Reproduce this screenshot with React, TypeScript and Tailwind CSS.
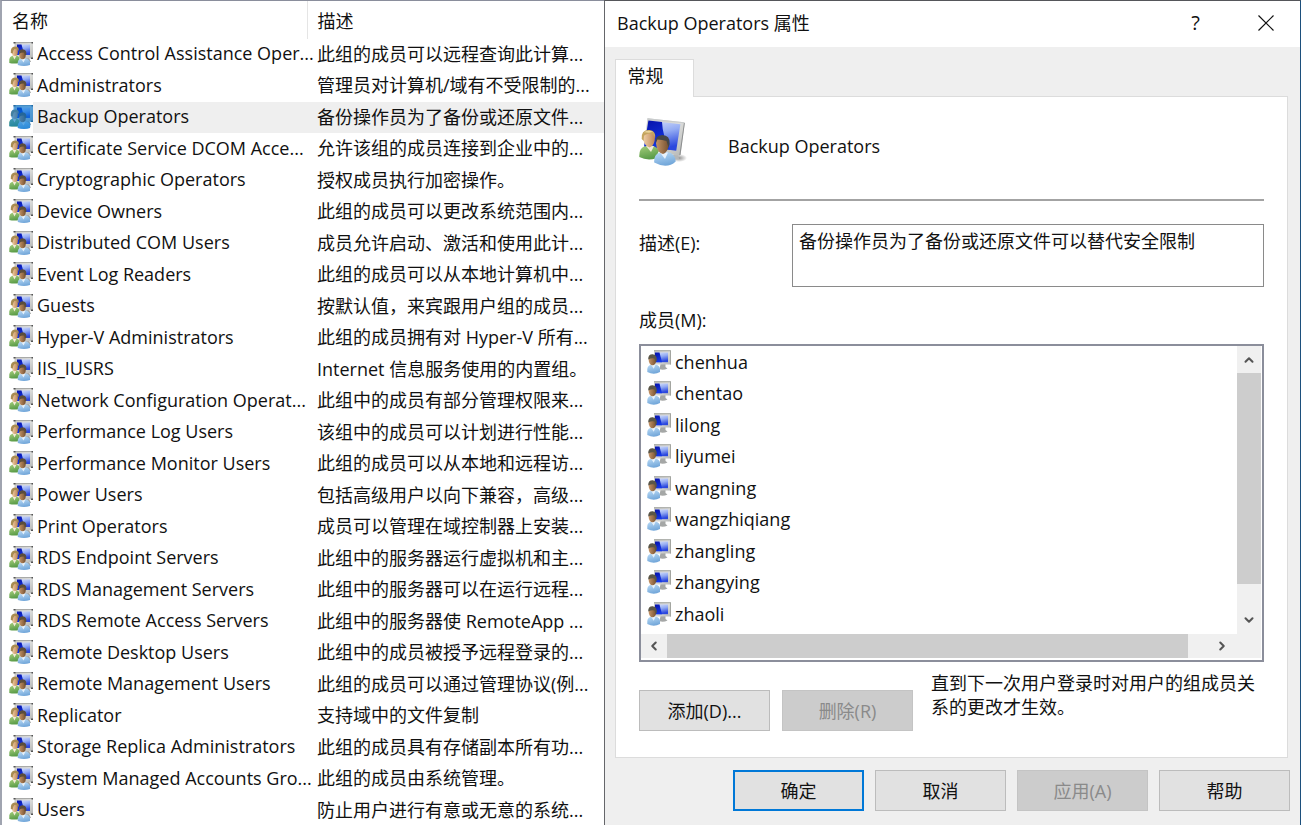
import { ChevronDown, ChevronLeft, ChevronRight, ChevronUp } from "lucide-react";

const groups: [string, string][] = [
  ["Access Control Assistance Oper...", "此组的成员可以远程查询此计算..."],
  ["Administrators", "管理员对计算机/域有不受限制的..."],
  ["Backup Operators", "备份操作员为了备份或还原文件..."],
  ["Certificate Service DCOM Acce...", "允许该组的成员连接到企业中的..."],
  ["Cryptographic Operators", "授权成员执行加密操作。"],
  ["Device Owners", "此组的成员可以更改系统范围内..."],
  ["Distributed COM Users", "成员允许启动、激活和使用此计..."],
  ["Event Log Readers", "此组的成员可以从本地计算机中..."],
  ["Guests", "按默认值，来宾跟用户组的成员..."],
  ["Hyper-V Administrators", "此组的成员拥有对 Hyper-V 所有..."],
  ["IIS_IUSRS", "Internet 信息服务使用的内置组。"],
  ["Network Configuration Operat...", "此组中的成员有部分管理权限来..."],
  ["Performance Log Users", "该组中的成员可以计划进行性能..."],
  ["Performance Monitor Users", "此组的成员可以从本地和远程访..."],
  ["Power Users", "包括高级用户以向下兼容，高级..."],
  ["Print Operators", "成员可以管理在域控制器上安装..."],
  ["RDS Endpoint Servers", "此组中的服务器运行虚拟机和主..."],
  ["RDS Management Servers", "此组中的服务器可以在运行远程..."],
  ["RDS Remote Access Servers", "此组中的服务器使 RemoteApp ..."],
  ["Remote Desktop Users", "此组中的成员被授予远程登录的..."],
  ["Remote Management Users", "此组的成员可以通过管理协议(例..."],
  ["Replicator", "支持域中的文件复制"],
  ["Storage Replica Administrators", "此组的成员具有存储副本所有功..."],
  ["System Managed Accounts Gro...", "此组的成员由系统管理。"],
  ["Users", "防止用户进行有意或无意的系统..."],
];

const members = ["chenhua", "chentao", "lilong", "liyumei", "wangning", "wangzhiqiang", "zhangling", "zhangying", "zhaoli"];

const selectedGroup = "Backup Operators";

function Gradients() {
  return (
    <svg className="absolute size-0" aria-hidden="true">
      <defs>
        <linearGradient id="screenLight" x1="0" y1="0" x2="0.3" y2="1">
          <stop offset="0" stopColor="#dbe4fd" />
          <stop offset="0.5" stopColor="#93abf3" />
          <stop offset="1" stopColor="#2c48de" />
        </linearGradient>
        <linearGradient id="screenDark" x1="0" y1="0" x2="0.4" y2="1">
          <stop offset="0" stopColor="#0712a8" />
          <stop offset="1" stopColor="#1438e6" />
        </linearGradient>
        <linearGradient id="frame" x1="0" y1="0" x2="1" y2="1">
          <stop offset="0" stopColor="#c4c5c4" />
          <stop offset="0.5" stopColor="#dcdddb" />
          <stop offset="1" stopColor="#b4b6b5" />
        </linearGradient>
        <linearGradient id="green" x1="0" y1="0" x2="0.3" y2="1">
          <stop offset="0" stopColor="#a6cf7c" />
          <stop offset="1" stopColor="#5b9c48" />
        </linearGradient>
        <linearGradient id="blue" x1="0" y1="0" x2="0.3" y2="1">
          <stop offset="0" stopColor="#bcdcf7" />
          <stop offset="1" stopColor="#74a8da" />
        </linearGradient>
        <linearGradient id="skin" x1="0" y1="0" x2="1" y2="0">
          <stop offset="0" stopColor="#f1cfa8" />
          <stop offset="1" stopColor="#bd8755" />
        </linearGradient>
        <linearGradient id="tan" x1="0" y1="0" x2="1" y2="0">
          <stop offset="0" stopColor="#c49468" />
          <stop offset="1" stopColor="#75502f" />
        </linearGradient>
        <radialGradient id="shadow">
          <stop offset="0" stopColor="#666" stopOpacity="0.7" />
          <stop offset="1" stopColor="#666" stopOpacity="0" />
        </radialGradient>
      </defs>
    </svg>
  );
}

function GroupIconLarge() {
  return (
    <svg viewBox="0 0 48 50" className="mt-px h-[50px] w-12 shrink-0 self-start" aria-hidden="true">
      <ellipse cx="40" cy="41" rx="8" ry="4" fill="url(#shadow)" />
      <path d="M34 38l5-1 1 5-6 1z" fill="#b5b7b8" />
      <path d="M8.5 1.3L45 5.2q1 .2.8 1.2L41.5 37q-.3 2-1.8 1.7L4.5 32.5z" fill="url(#frame)" />
      <path d="M8.5 1.3L45 5.2l-.2 1L8.3 2.4z" fill="#c9cccd" />
      <path d="M45 5.6l.8.6-4.2 31-1.3 1.4z" fill="#8d8f90" />
      <path d="M9.4 3.4l32 3.800-4.200 26.600-32-4.200z" fill="url(#screenLight)" />
      <path d="M9.4 3.4l13.6 1.6q.6 14 8 27.700l-25.800-3.100z" fill="url(#screenDark)" />
      <path d="M0.3 40q-.5-8.500 5-10.500l7.500-1q6 1.500 7 5.500l-3 7.500q-9 2.500-16.500-1.500z" fill="url(#green)" />
      <path d="M7 29l5 6 3-6z" fill="#f2ead9" />
      <path d="M4 20q0-6.500 6-6.500t6 6.500q-.2 9-5.500 10.500Q4.500 29 4 20z" fill="url(#skin)" />
      <path d="M2.700 22q-.8-9.500 8-9 6 .6 5.500 8-1.500-4-5-4.500Q6 17 5 19q-.4 2-.2 5z" fill="#c5a55e" />
      <path d="M5 15.200q4-2.500 9-.5l-4 1z" fill="#ead49a" />
      <path d="M15.200 45.500q-.5-8 5-9.800l8-.8q8 1 8.500 9.500-8.500 8-21.500 1.100z" fill="url(#blue)" />
      <path d="M21 35.500l5 6.500 3-6.500z" fill="#e8f2fb" />
      <path d="M17 26.500q0-7.500 6.500-7.500t6.500 7.500Q29.500 35 24 37q-6-1.500-7-10.500z" fill="url(#tan)" />
      <path d="M16.700 26q-1-7.500 6.500-8 8 .2 7.500 9l-1.200 3.500-2-6.500q-4-1.500-9-1.500z" fill="#454647" />
    </svg>
  );
}

function GroupIcon({ selected }: { selected: boolean }) {
  return (
    <svg viewBox="0 0 24 24" className="mb-0.5 size-6 shrink-0" aria-hidden="true">
      <path d="M16 16h4l2 4h-8z" fill="#9c9e9c" />
      <path d="M5.500 0h18.500v16.500H5.500z" fill="url(#frame)" />
      <path d="M5.500 0h18.500v1H5.500z" fill="#a9aaa8" />
      <path d="M4.500 0h2v1.500h-2zM22.500 0H24v1.500h-1.500zM22 15.500h2V17h-2z" fill="#555" />
      <path d="M8 2.500h13V13H8z" fill="url(#screenLight)" />
      <path d="M8 2.500h4.500l3 10.500H8z" fill="url(#screenDark)" />
      <path d="M.3 21v-3.500Q.5 14.500 4 13.500h4l2.500 2V21Q5 22 .3 21z" fill="url(#green)" />
      <path d="M3.500 13.500l2 4 2-4z" fill="#f4ead8" />
      <ellipse cx="5.800" cy="9.500" rx="3" ry="4.500" fill="url(#skin)" />
      <path d="M1.800 11Q1.300 4.500 6 4.500T9.500 9Q8 6.500 5.500 7 4 8 3.700 11.500z" fill="#a98c52" />
      <path d="M8.800 23v-3q.4-3 3.700-3.500h4.500q3.500.7 4 3.500v3q-6 2-12.200 0z" fill="url(#blue)" />
      <path d="M12 16.500l2.500 4 2-4z" fill="#e8f2fb" />
      <ellipse cx="13.500" cy="12.500" rx="3.300" ry="4.700" fill="url(#tan)" />
      <path d="M10 12q-.3-4.500 3.500-4.800 4.500.3 3.800 5.500l-1.500.5-.5-2.500q-2-.7-5.300 1.300z" fill="#5a4d3c" />
      {selected && (
        <path
          d="M4.500 0H24v17h-3q1 3 0 6-6 2-12.200 0v-1.500H.3v-4Q.5 14.500 3 13.700 1 10 2.300 6.500q1-2 2.200-2z"
          fill="#0078d7"
          fillOpacity="0.6"
        />
      )}
    </svg>
  );
}

function UserIcon() {
  return (
    <svg viewBox="0 0 24 24" className="size-6 shrink-0" aria-hidden="true">
      <path d="M13.500 14h5v3l2 1.500q-4 2-8 .8z" fill="#a5a7a6" />
      <path d="M7 .3h16.500q.5 0 .5.700v13q0 .6-.6.600H7z" fill="url(#frame)" />
      <path d="M7 .3h17v1H7zM23 1h1v13.500h-1z" fill="#a3a5a0" />
      <path d="M8 2.500h13v9.700H8z" fill="url(#screenLight)" />
      <path d="M8 2.500h4.500l2.500 9.700H8z" fill="url(#screenDark)" />
      <path d="M.3 22v-3q.2-3.500 4-4.500h4.500q4 1 4.200 4.500v3q-6 3.500-12.700 0z" fill="url(#blue)" />
      <path d="M4 14.500l2.700 4.300 2-4.300z" fill="#e8f2fb" />
      <ellipse cx="5.500" cy="10" rx="3.800" ry="5.300" fill="url(#tan)" />
      <path d="M1.200 9.500Q1 4.300 5.500 4.200q4.800.3 4.200 6.300l-1.200 1.500-.9-3.500Q5 7.500 1.200 9.500z" fill="#5a5648" />
    </svg>
  );
}

const pushButton = "h-[41px] w-[131px] shrink-0 text-center";
const enabledButton = "border border-[#bcbcbc] bg-[#e1e1e1]";
const disabledButton = "border border-[#c4c4c4] bg-[#cccccc] text-[#8a8a8a]";

function GroupTable() {
  return (
    <section className="min-w-0 overflow-hidden border-t border-l-2 border-t-[#8a8e9c] border-l-[#a0a4b0] bg-white">
      <table className="w-full table-fixed border-collapse text-left whitespace-nowrap">
        <thead>
          <tr className="h-[38px]">
            <th className="w-[305px] border-r border-[#e5e5e5] p-0 pt-0.5 pl-2.5 font-normal">名称</th>
            <th className="p-0 pt-0.5 pl-2.5 font-normal">描述</th>
          </tr>
        </thead>
        <tbody>
          {groups.map(([name, description]) => {
            const selected = name === selectedGroup;
            return (
              <tr key={name} className="odd:h-[31px] even:h-8">
                <td className="p-0 pl-[7px]">
                  <div className="flex h-[31px] items-center">
                    <GroupIcon selected={selected} />
                    <span className={selected ? "flex-1 bg-[#efefef] pb-0.5 pl-1 leading-[29px]" : "flex-1 pb-0.5 pl-1 leading-[29px]"}>
                      {name}
                    </span>
                  </div>
                </td>
                <td className={selected ? "bg-[#efefef] p-0 pb-0.5 pl-2.5" : "p-0 pb-0.5 pl-2.5"}>{description}</td>
              </tr>
            );
          })}
        </tbody>
      </table>
    </section>
  );
}

function MemberList() {
  return (
    <div className="grid grid-cols-[1fr_24px] grid-rows-[1fr_24px] border-2 border-[#8b8e9b] pr-px pb-0.5" aria-labelledby="members-label" role="group">
      <ul className="pb-[5px] pl-1.5">
        {members.map((member) => (
          <li key={member} className="flex items-center gap-1 odd:h-[31px] even:h-8">
            <UserIcon />
            {member}
          </li>
        ))}
      </ul>
      <div className="flex flex-col bg-[#f0f0f0]">
        <button aria-label="向上滚动" className="flex h-[27px] items-center justify-center text-[#555]">
          <ChevronUp size={14} strokeWidth={3.5} />
        </button>
        <div className="flex-1 bg-[#cdcdcd]" />
        <button aria-label="向下滚动" className="flex h-[50px] items-end justify-center pb-[7px] text-[#555]">
          <ChevronDown size={14} strokeWidth={3.5} />
        </button>
      </div>
      <div className="col-span-2 flex bg-[#f0f0f0]">
        <button aria-label="向左滚动" className="flex w-[26px] items-center justify-center text-[#555]">
          <ChevronLeft size={14} strokeWidth={3.5} />
        </button>
        <div className="flex-1 bg-[#cdcdcd]" />
        <button aria-label="向右滚动" className="mr-6 flex w-[49px] items-center justify-end pr-2 text-[#555]">
          <ChevronRight size={14} strokeWidth={3.5} />
        </button>
      </div>
    </div>
  );
}

function PropertiesDialog() {
  return (
    <section className="flex min-w-0 flex-col border border-t-[#55565a] border-r-[#1c4f7c] border-b-[#55565a] border-l-[#65666a] bg-[#efefef]" role="dialog" aria-labelledby="dialog-title">
      <header className="flex h-[46px] items-center justify-between bg-white pr-6 pb-0.5 pl-3">
        <h1 id="dialog-title">Backup Operators 属性</h1>
        <div className="flex items-center gap-14">
          <button aria-label="帮助信息" className="text-[20px]">?</button>
          <button aria-label="关闭">
            <svg viewBox="0 0 20 20" className="size-5" aria-hidden="true">
              <path d="M2.500 2.500l15 15M17.500 2.500l-15 15" stroke="#111" strokeWidth="1.200" />
            </svg>
          </button>
        </div>
      </header>

      <div className="pt-3 pr-3 pl-2.5">
        <div role="tablist" className="flex">
          <button role="tab" aria-selected="true" className="relative z-10 -mb-px h-[38px] w-[79px] border border-b-0 border-[#dcdcdc] bg-white pr-[18px] pb-1.5 text-center">
            常规
          </button>
        </div>
        <div role="tabpanel" className="border border-[#dcdcdc] bg-white px-[23px] pt-[19px] pb-[25px]">
          <div className="flex h-[60px] items-center gap-[41px]">
            <GroupIconLarge />
            <span>Backup Operators</span>
          </div>
          <hr className="mt-[23px] border-t-2 border-[#a3a3a3]" />
          <div className="mt-[23px] flex">
            <label htmlFor="description" className="w-[153px] shrink-0 pt-[7px]">描述(E):</label>
            <textarea
              id="description"
              readOnly
              defaultValue="备份操作员为了备份或还原文件可以替代安全限制"
              className="h-[63px] min-w-0 flex-1 resize-none overflow-hidden border border-[#8a8a8a] bg-white px-1.5 py-1 outline-none"
            />
          </div>
          <p id="members-label" className="mt-[21px] mb-3">成员(M):</p>
          <MemberList />
          <div className="mt-[9px] flex h-[61px]">
            <button className={`${pushButton} ${enabledButton} mt-[19px]`}>添加(D)...</button>
            <button disabled className={`${pushButton} ${disabledButton} mt-[19px] ml-3`}>删除(R)</button>
            <p className="ml-[18px] flex-1">直到下一次用户登录时对用户的组成员关系的更改才生效。</p>
          </div>
        </div>
      </div>

      <footer className="mt-3 flex justify-end gap-[11px] pr-2.5 pb-3">
        <button className={`${pushButton} border-2 border-[#0078d7] bg-[#e1e1e1]`}>确定</button>
        <button className={`${pushButton} ${enabledButton}`}>取消</button>
        <button disabled className={`${pushButton} ${disabledButton}`}>应用(A)</button>
        <button className={`${pushButton} ${enabledButton}`}>帮助</button>
      </footer>
    </section>
  );
}

export default function App() {
  return (
    <main
      lang="zh-CN"
      className="grid min-h-screen grid-cols-[604fr_697fr] bg-white font-['Open_Sans','Noto_Sans_CJK_SC',sans-serif] text-[18px] leading-6 text-[#111]"
    >
      <Gradients />
      <GroupTable />
      <PropertiesDialog />
    </main>
  );
}
